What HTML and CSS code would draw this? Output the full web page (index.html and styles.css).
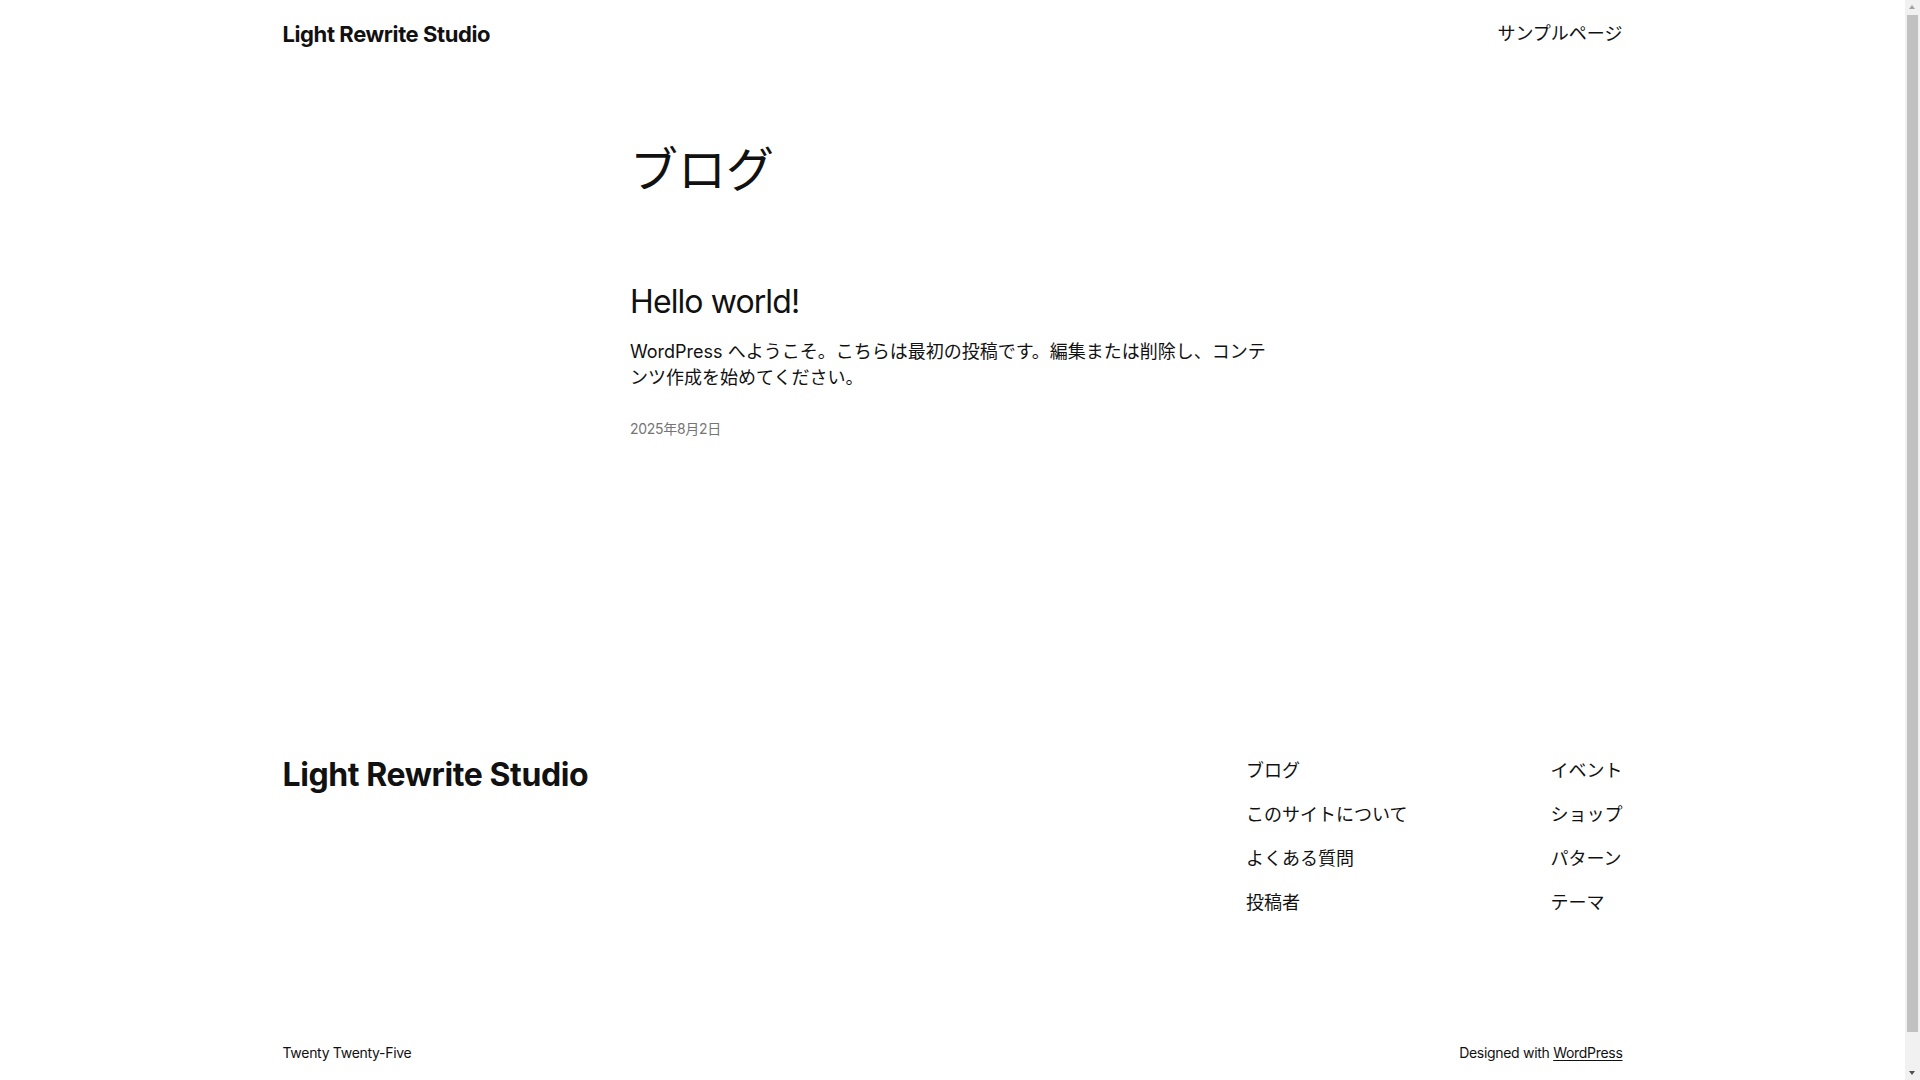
FILE: index.html
```html
<!DOCTYPE html>
<html lang="ja">
<head>
<meta charset="utf-8">
<title>ブログ – Light Rewrite Studio</title>
<link rel="stylesheet" href="styles.css">
</head>
<body>
<header class="site-header">
  <a class="site-title" href="#">Light Rewrite Studio</a>
  <nav class="header-nav"><a href="#">サンプルページ</a></nav>
</header>
<main class="site-main">
  <h1 class="page-title">ブログ</h1>
  <article class="post">
    <h2 class="post-title"><a href="#">Hello world!</a></h2>
    <p class="post-excerpt">WordPress へようこそ。こちらは最初の投稿です。編集または削除し、コンテンツ作成を始めてください。</p>
    <div class="post-date">2025年8月2日</div>
  </article>
</main>
<footer class="site-footer">
  <div class="footer-top">
    <a class="footer-title" href="#">Light Rewrite Studio</a>
    <div class="footer-navs">
      <nav class="footer-col">
        <a href="#">ブログ</a>
        <a href="#">このサイトについて</a>
        <a href="#">よくある質問</a>
        <a href="#">投稿者</a>
      </nav>
      <nav class="footer-col">
        <a href="#">イベント</a>
        <a href="#">ショップ</a>
        <a href="#">パターン</a>
        <a href="#">テーマ</a>
      </nav>
    </div>
  </div>
  <div class="footer-bottom">
    <span>Twenty Twenty-Five</span>
    <span>Designed with <a class="wp-link" href="#">WordPress</a></span>
  </div>
</footer>
<div class="scrollbar" aria-hidden="true">
  <span class="sb-arrow sb-up"></span>
  <span class="sb-thumb"></span>
  <span class="sb-arrow sb-down"></span>
</div>
</body>
</html>
```
FILE: styles.css
```css
html, body {
  margin: 0;
  padding: 0;
  background: #ffffff;
}
body {
  padding-right: 15px;
  font-family: Inter, "Noto Sans CJK JP", sans-serif;
  color: #111111;
}
a {
  color: inherit;
  text-decoration: none;
}
.site-header {
  width: 1340px;
  margin: 0 auto;
  height: 68px;
  display: flex;
  justify-content: space-between;
  align-items: center;
}
.site-title {
  font-size: 22px;
  font-weight: 700;
  letter-spacing: -0.4px;
}
.header-nav {
  font-size: 18px;
  line-height: 26px;
}
.site-main {
  width: 645px;
  margin: 0 auto;
  padding-top: 73px;
  padding-bottom: 317px;
}
.page-title {
  margin: 0;
  font-size: 48px;
  font-weight: 400;
  line-height: 57.6px;
}
.post {
  margin-top: 84px;
}
.post-title {
  margin: 0;
  font-size: 32px;
  font-weight: 400;
  line-height: 38.4px;
  letter-spacing: -0.9px;
}
.post-excerpt {
  margin: 18px 0 0;
  font-size: 18px;
  line-height: 26px;
}
.post-date {
  margin-top: 28px;
  font-size: 14px;
  line-height: 20px;
  color: #757575;
  letter-spacing: -0.3px;
}
.site-footer {
  width: 1340px;
  margin: 0 auto;
  padding-bottom: 52px;
}
.footer-top {
  display: flex;
  justify-content: space-between;
  align-items: flex-start;
}
.footer-title {
  font-size: 32px;
  font-weight: 700;
  line-height: 38px;
  letter-spacing: -0.4px;
}
.footer-navs {
  display: flex;
  gap: 143px;
  margin-top: 2px;
}
.footer-col {
  display: flex;
  flex-direction: column;
  gap: 18px;
  font-size: 18px;
  line-height: 26px;
}
.footer-bottom {
  margin-top: 127px;
  display: flex;
  justify-content: space-between;
  font-size: 14px;
  line-height: 20px;
  letter-spacing: -0.3px;
}
.wp-link {
  text-decoration: underline;
  text-underline-offset: 2px;
}
.scrollbar {
  position: fixed;
  top: 0;
  right: 0;
  width: 15px;
  height: 100vh;
  background: #f1f1f1;
  display: flex;
  flex-direction: column;
  align-items: center;
}
.sb-arrow {
  width: 15px;
  height: 15px;
  flex: none;
  position: relative;
}
.sb-arrow::after {
  content: "";
  position: absolute;
  left: 4px;
  width: 0;
  height: 0;
  border-left: 3.5px solid transparent;
  border-right: 3.5px solid transparent;
}
.sb-up::after {
  top: 5px;
  border-bottom: 4px solid #a3a3a3;
}
.sb-down::after {
  top: 6px;
  border-top: 4px solid #505050;
}
.sb-thumb {
  flex: 1;
  width: 11px;
  margin-bottom: 33px;
  background: #c1c1c1;
}
```
